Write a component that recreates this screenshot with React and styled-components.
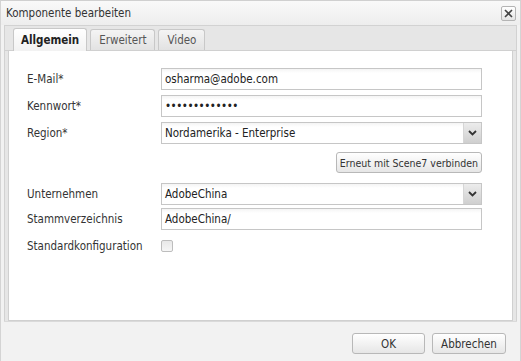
import React from "react";
import styled, { createGlobalStyle } from "styled-components";

const Global = createGlobalStyle`
  html, body { margin: 0; padding: 0; background: #f2f2f2; }
  body { font-family: "DejaVu Sans Condensed", "DejaVu Sans", Verdana, sans-serif; font-stretch: condensed; }
  * { box-sizing: border-box; }
`;

const Window = styled.div`
  width: 521px;
  height: 361px;
  display: flex;
  flex-direction: column;
  background: #f2f2f2;
  border-left: 1px solid #d4d4d4;
  border-right: 1px solid #d4d4d4;
  border-top: 1px solid #d0d0d0;
`;

const TitleBar = styled.div`
  height: 24px;
  display: flex;
  align-items: center;
  justify-content: space-between;
  padding: 0 4px 0 5px;
  background: linear-gradient(#f9f9f9, #ededed);
  font-size: 11.5px;
  color: #333;
`;

const CloseButton = styled.div`
  width: 15px;
  height: 15px;
  border: 1px solid #b4b4b4;
  border-radius: 2px;
  background: linear-gradient(#ffffff, #e4e4e4);
  display: flex;
  align-items: center;
  justify-content: center;
`;

const TabFrame = styled.div`
  margin: 0 3px;
  border: 1px solid #d2d2d2;
  border-bottom: none;
  background: #e6e6e6;
  display: flex;
  flex-direction: column;
  height: 296px;
`;

const TabStrip = styled.div`
  height: 25px;
  display: flex;
  align-items: flex-end;
  gap: 3px;
  padding-left: 8px;
  border-bottom: 1px solid #d0d0d0;
`;

const Tab = styled.div`
  height: ${(p) => (p.$active ? "23px" : "21px")};
  padding: 0 ${(p) => (p.$active ? "7px" : "8px")};
  display: flex;
  align-items: center;
  font-size: 11.5px;
  font-weight: ${(p) => (p.$active ? "bold" : "normal")};
  color: ${(p) => (p.$active ? "#222" : "#555")};
  border: 1px solid #c8c8c8;
  border-bottom: none;
  border-radius: 3px 3px 0 0;
  background: ${(p) =>
    p.$active ? "linear-gradient(#ffffff, #f2f2f2)" : "linear-gradient(#f4f4f4, #e2e2e2)"};
  margin-bottom: ${(p) => (p.$active ? "-1px" : "0")};
`;

const Panel = styled.div`
  flex: 1;
  margin: 0 3px;
  background: #fff;
  border: 1px solid #d0d0d0;
  border-top: none;
  padding: 17px 30px 0 18px;
  display: flex;
  flex-direction: column;
`;

const Row = styled.div`
  display: flex;
  align-items: center;
  height: 22px;
  margin-top: ${(p) => p.$mt || 0}px;
`;

const Label = styled.div`
  width: 134px;
  font-size: 11.5px;
  color: #333;
`;

const Input = styled.div`
  flex: 1;
  height: 22px;
  border: 1px solid #c6c6c6;
  background: linear-gradient(#f4f4f4, #ffffff 4px);
  display: flex;
  align-items: center;
  padding-left: 3px;
  font-size: 11.5px;
  color: #222;
  letter-spacing: ${(p) => (p.$dots ? "-0.5px" : "0")};
`;

const SelectBox = styled(Input)`
  padding-right: 0;
  justify-content: space-between;
`;

const Arrow = styled.div`
  width: 18px;
  height: 20px;
  background: linear-gradient(#ececec, #cfcfcf);
  border-left: 1px solid #d6d6d6;
  display: flex;
  align-items: center;
  justify-content: center;
`;

const ButtonRow = styled.div`
  display: flex;
  justify-content: flex-end;
  margin-top: ${(p) => p.$mt || 0}px;
`;

const Button = styled.div`
  height: ${(p) => p.$h || 21}px;
  width: ${(p) => (p.$w ? p.$w + "px" : "auto")};
  padding: 0 3px;
  border: 1px solid #b8b8b8;
  border-radius: 3px;
  background: linear-gradient(#ffffff, #e6e6e6);
  display: flex;
  align-items: center;
  justify-content: center;
  font-size: ${(p) => p.$fs || 11.5}px;
  color: #333;
`;

const Checkbox = styled.div`
  width: 12px;
  height: 12px;
  border: 1px solid #bdbdbd;
  border-radius: 2px;
  background: linear-gradient(#e8e8e8, #f6f6f6);
`;

const Footer = styled.div`
  flex: 1;
  display: flex;
  justify-content: flex-end;
  align-items: flex-start;
  gap: 7px;
  padding: 11px 11px 0 0;
  border-top: 1px solid #dadada;
  margin: 0 3px;
`;

const Chevron = () => (
  <svg width="9" height="6" viewBox="0 0 9 6">
    <path d="M1 1 L4.5 4.5 L8 1" fill="none" stroke="#333" strokeWidth="1.8" />
  </svg>
);

export default function App() {
  return (
    <>
      <Global />
      <Window>
        <TitleBar>
          <span>Komponente bearbeiten</span>
          <CloseButton>
            <svg width="9" height="9" viewBox="0 0 9 9">
              <path d="M1 1 L8 8 M8 1 L1 8" stroke="#444" strokeWidth="1.6" />
            </svg>
          </CloseButton>
        </TitleBar>
        <TabFrame>
          <TabStrip>
            <Tab $active>Allgemein</Tab>
            <Tab>Erweitert</Tab>
            <Tab>Video</Tab>
          </TabStrip>
          <Panel>
            <Row>
              <Label>E-Mail*</Label>
              <Input>osharma@adobe.com</Input>
            </Row>
            <Row $mt={5}>
              <Label>Kennwort*</Label>
              <Input $dots>•••••••••••••</Input>
            </Row>
            <Row $mt={5}>
              <Label>Region*</Label>
              <SelectBox>
                <span>Nordamerika - Enterprise</span>
                <Arrow>
                  <Chevron />
                </Arrow>
              </SelectBox>
            </Row>
            <ButtonRow $mt={8}>
              <Button $fs={10.5}>Erneut mit Scene7 verbinden</Button>
            </ButtonRow>
            <Row $mt={10}>
              <Label>Unternehmen</Label>
              <SelectBox>
                <span>AdobeChina</span>
                <Arrow>
                  <Chevron />
                </Arrow>
              </SelectBox>
            </Row>
            <Row $mt={3}>
              <Label>Stammverzeichnis</Label>
              <Input>AdobeChina/</Input>
            </Row>
            <Row $mt={5}>
              <Label>Standardkonfiguration</Label>
              <Checkbox />
            </Row>
          </Panel>
        </TabFrame>
        <Footer>
          <Button $w={73} $h={21}>OK</Button>
          <Button $w={74} $h={21}>Abbrechen</Button>
        </Footer>
      </Window>
    </>
  );
}
